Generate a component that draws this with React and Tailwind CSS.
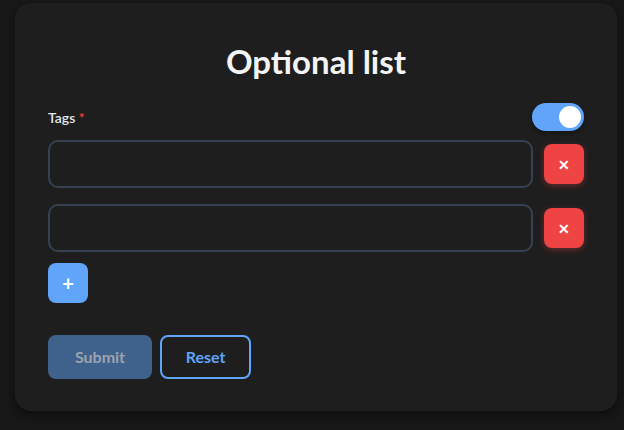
import React, { useState } from 'react';

const font = { fontFamily: 'Lato, "Noto Sans", sans-serif' };

function Toggle({ on, onChange }) {
  return <button onClick={() => onChange(!on)} className={`w-[52px] h-[28px] rounded-full p-[3px] flex items-center ${on ? 'bg-[#60a5fa] justify-end' : 'bg-[#374151] justify-start'} shadow-[0_2px_4px_rgba(0,0,0,0.4)]`}>
      <span className="w-[22px] h-[22px] rounded-full bg-white block" />
    </button>;
}

function TagRow({ value, onChange, onRemove }) {
  return <div className="flex items-center gap-[11px]">
      <input value={value} onChange={e => onChange(e.target.value)} className="flex-1 h-[48px] rounded-[10px] border-2 border-[#374151] bg-[#1e1e1e] px-3 text-white outline-none" />
      <button onClick={onRemove} className="w-[40px] h-[40px] rounded-[8px] bg-[#ef4444] text-white text-[14px] font-bold flex items-center justify-center shadow-[0_2px_6px_rgba(239,68,68,0.35)]">
        ✕
      </button>
    </div>;
}

export default function App() {
  const [enabled, setEnabled] = useState(true);
  const [tags, setTags] = useState(['', '']);
  return <div className="min-h-[430px] bg-[#181818] pt-[3px] pl-[15px] pr-[7px]" style={font}>
      <div className="bg-[#1e1e1e] rounded-[16px] shadow-[0_4px_12px_rgba(0,0,0,0.5)] px-[33px] pt-[40px] pb-[32px]">
        <h1 className="text-center text-[33px] font-bold text-[#f3f4f6] leading-[36px]">Optional list</h1>
        <div className="mt-[24px] flex items-center justify-between">
          <span className="text-[14px] font-semibold text-[#e5e7eb]">
            Tags <span className="text-[#ef4444]">*</span>
          </span>
          <Toggle on={enabled} onChange={setEnabled} />
        </div>
        <div className="mt-[9px] flex flex-col gap-[16px]">
          {tags.map((t, i) => <TagRow key={i} value={t} onChange={v => setTags(tags.map((x, j) => j === i ? v : x))} onRemove={() => setTags(tags.filter((_, j) => j !== i))} />)}
        </div>
        <button onClick={() => setTags([...tags, ''])} className="mt-[11px] w-[40px] h-[40px] rounded-[8px] bg-[#60a5fa] text-white text-[20px] font-bold flex items-center justify-center">
          +
        </button>
        <div className="mt-[32px] flex gap-[8px]">
          <button className="w-[104px] h-[44px] rounded-[8px] bg-[#60a5fa]/50 text-[#9ca3af] text-[16px] font-bold">Submit</button>
          <button className="w-[91px] h-[44px] rounded-[8px] border-2 border-[#60a5fa] text-[#60a5fa] text-[16px] font-bold">Reset</button>
        </div>
      </div>
    </div>;
}
